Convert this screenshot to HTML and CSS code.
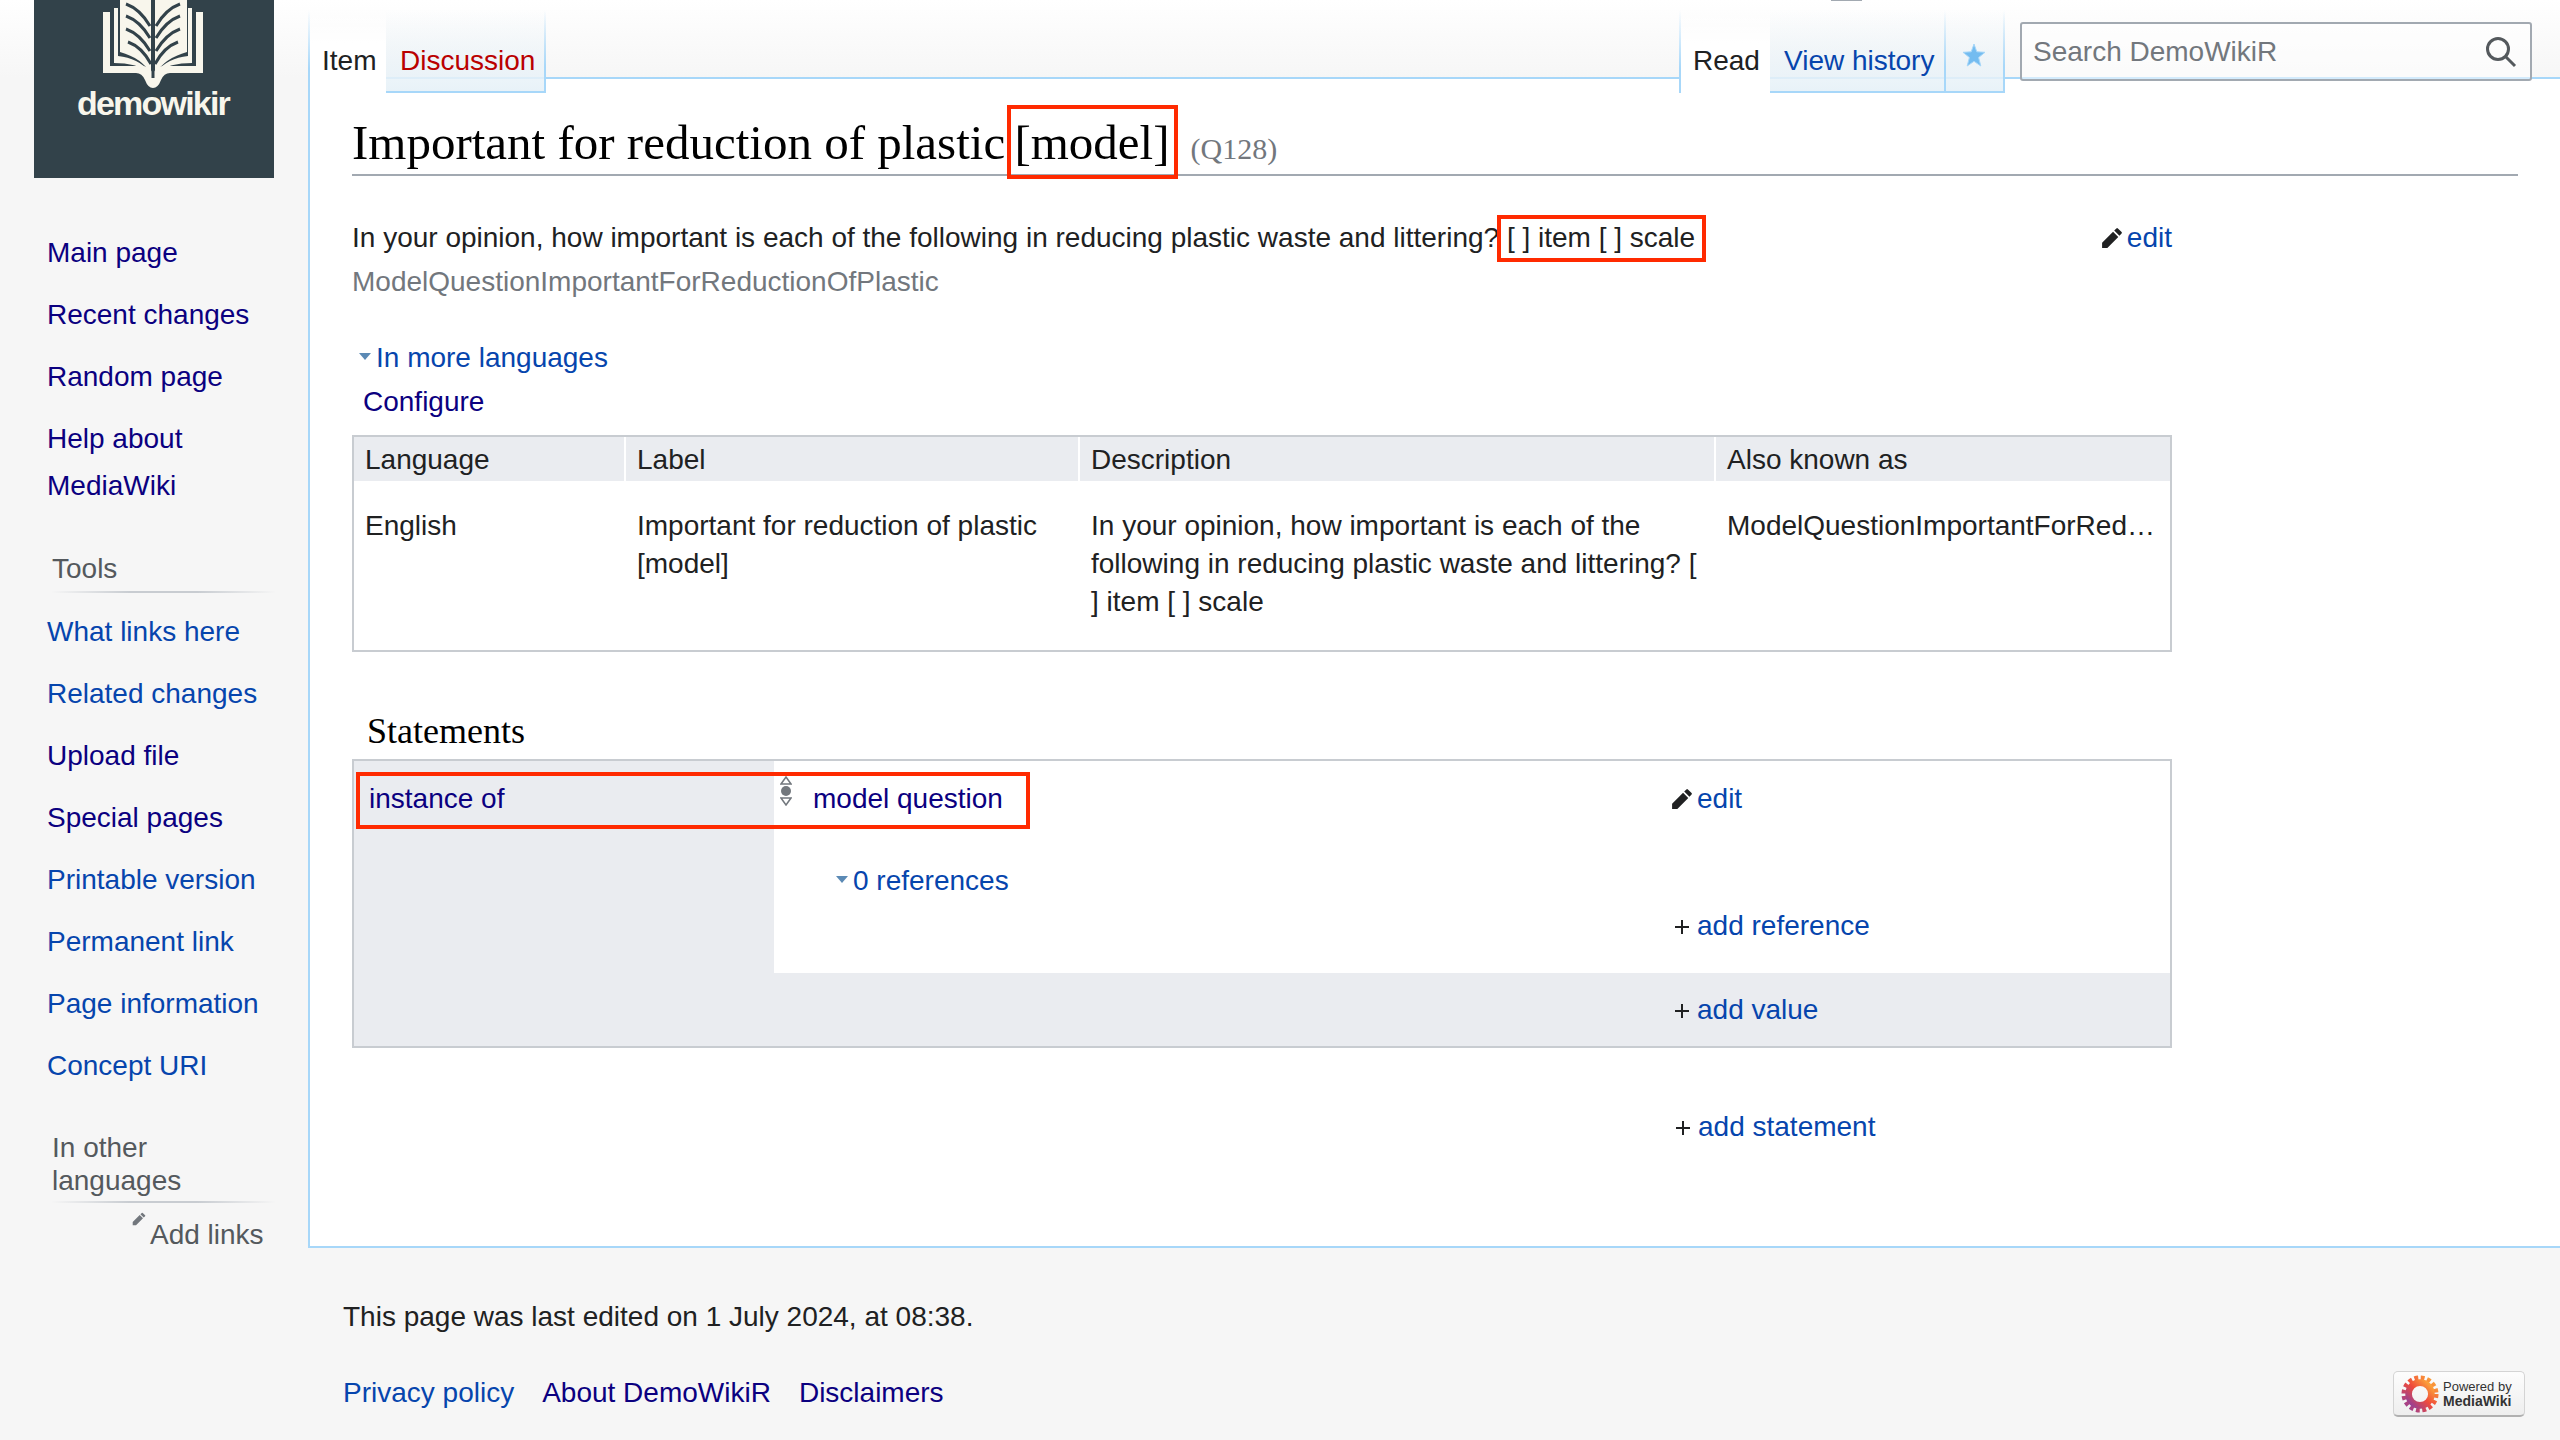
FILE: index.html
```
<!DOCTYPE html>
<html lang="en">
<head>
<meta charset="utf-8">
<title>Important for reduction of plastic [model]</title>
<link rel="stylesheet" href="styles.css">
</head>
<body>
<div class="tick"></div>
<div class="page">
  <aside class="sidebar">
    <div class="logo">
      <svg class="logo-mark" viewBox="0 0 240 92" aria-hidden="true">
        <path class="cream" d="M69 12h7v54h32q8 0 11 8 3-8 11-8h32V12h7v61h-33q-6 0-9 7-3 8-8 8t-8-8q-3-7-9-7H69z"/>
        <path class="cream" d="M80 8h4v48q20 2 32 16-14-9-36-9zM158 8h-4v48q-20 2-32 16 14-9 36-9z"/>
        <path class="cream" d="M86 0h31v74Q108 58 86 52zM121 0h32v52q-22 6-32 22z"/>
        <path class="vein" d="M119 0v78M92 4q14 5 24 22M92 16q14 5 24 22M92 29q14 5 24 22M94 42q14 5 23 22M146 4q-14 5-24 22M146 16q-14 5-24 22M146 29q-14 5-24 22M144 42q-14 5-23 22"/>
      </svg>
      <div class="logo-word">demowikir</div>
    </div>
    <ul class="nav nav-first">
      <li><a class="seen" href="#">Main page</a></li>
      <li><a class="seen" href="#">Recent changes</a></li>
      <li><a class="seen" href="#">Random page</a></li>
      <li><a class="seen" href="#">Help about MediaWiki</a></li>
    </ul>
    <h3 class="nav-head">Tools</h3>
    <ul class="nav">
      <li><a href="#">What links here</a></li>
      <li><a href="#">Related changes</a></li>
      <li><a class="seen" href="#">Upload file</a></li>
      <li><a class="seen" href="#">Special pages</a></li>
      <li><a href="#">Printable version</a></li>
      <li><a href="#">Permanent link</a></li>
      <li><a href="#">Page information</a></li>
      <li><a href="#">Concept URI</a></li>
    </ul>
    <h3 class="nav-head nav-head-lang">In other languages</h3>
    <div class="add-links">
      <svg class="add-pencil" viewBox="0 0 20 20" aria-hidden="true"><path d="M16.77 8l1.94-2a1 1 0 0 0 0-1.41l-3.34-3.3a1 1 0 0 0-1.41 0L12 3.23zM1 14.25V19h4.75l9.96-9.96-4.75-4.75z"/></svg>
      <span>Add links</span>
    </div>
  </aside>

  <div class="main">
    <nav class="tabs">
      <a class="tab tab-active tab-item" href="#">Item</a>
      <a class="tab tab-new" href="#">Discussion</a>
      <div class="tabs-right">
        <a class="tab tab-active tab-read" href="#">Read</a>
        <a class="tab tab-history" href="#">View history</a>
        <a class="tab tab-star" href="#" aria-label="Watch">
          <svg viewBox="0 0 24 24" aria-hidden="true"><path d="M12 1l2.800 7.800 8.200.5-6.400 5.200 2.200 8.500L12 18.300 5.200 23l2.200-8.500L1 9.300l8.200-.5z"/></svg>
        </a>
        <div class="search">
          <span>Search DemoWikiR</span>
          <svg viewBox="0 0 32 32" aria-hidden="true"><circle cx="13" cy="13" r="10.500"/><path d="M20.500 20.500L30 30"/></svg>
        </div>
      </div>
    </nav>

    <main class="content">
      <h1 class="title">Important for reduction of plastic <span class="mark mark-title">[model]</span><span class="qid">(Q128)</span></h1>

      <div class="desc-row">
        <div>In your opinion, how important is each of the following in reducing plastic waste and littering?<span class="mark mark-desc"> [ ] item [ ] scale</span></div>
        <a class="edit" href="#"><svg class="pencil" viewBox="0 0 20 20" aria-hidden="true"><path d="M16.77 8l1.940-2a1 1 0 0 0 0-1.410l-3.340-3.300a1 1 0 0 0-1.410 0L12 3.230zM1 14.250V19h4.750l9.960-9.960-4.750-4.750z"/></svg><span>edit</span></a>
      </div>
      <div class="alias">ModelQuestionImportantForReductionOfPlastic</div>

      <div class="toggle toggle-langs"><i class="tri"></i><a href="#">In more languages</a></div>
      <div class="configure"><a class="seen" href="#">Configure</a></div>

      <div class="lang-table">
        <div class="lang-head">Language</div>
        <div class="lang-head">Label</div>
        <div class="lang-head">Description</div>
        <div class="lang-head">Also known as</div>
        <div class="lang-cell">English</div>
        <div class="lang-cell">Important for reduction of plastic [model]</div>
        <div class="lang-cell">In your opinion, how important is each of the following in reducing plastic waste and littering? [ ] item [ ] scale</div>
        <div class="lang-cell lang-alias">ModelQuestionImportantForRed…</div>
      </div>

      <h2 class="st-title">Statements</h2>
      <div class="st-group">
        <div class="st-body">
          <div class="st-label"><a class="seen" href="#">instance of</a></div>
          <div class="st-list">
            <div class="st-value">
              <svg class="rank" viewBox="0 0 12 30" aria-hidden="true">
                <path class="rank-o" d="M6 1l5 7H1z"/><circle class="rank-f" cx="6" cy="15" r="5"/><path class="rank-o" d="M6 29l5-7H1z"/>
              </svg>
              <a class="seen value-link" href="#">model question</a>
              <a class="edit edit-st" href="#"><svg class="pencil" viewBox="0 0 20 20" aria-hidden="true"><path d="M16.770 8l1.940-2a1 1 0 0 0 0-1.410l-3.340-3.300a1 1 0 0 0-1.410 0L12 3.230zM1 14.250V19h4.750l9.960-9.960-4.750-4.750z"/></svg><span>edit</span></a>
            </div>
            <div class="toggle toggle-refs"><i class="tri"></i><a href="#">0 references</a></div>
            <div class="add add-ref"><svg class="plus" viewBox="0 0 14 14" aria-hidden="true"><path d="M6 0h2v6h6v2H8v6H6V8H0V6h6z"/></svg><a href="#">add reference</a></div>
          </div>
          <div class="mark-row" aria-hidden="true"></div>
        </div>
        <div class="st-foot"><div class="add"><svg class="plus" viewBox="0 0 14 14" aria-hidden="true"><path d="M6 0h2v6h6v2H8v6H6V8H0V6h6z"/></svg><a href="#">add value</a></div></div>
      </div>
      <div class="add add-statement"><svg class="plus" viewBox="0 0 14 14" aria-hidden="true"><path d="M6 0h2v6h6v2H8v6H6V8H0V6h6z"/></svg><a href="#">add statement</a></div>
    </main>

    <footer class="footer">
      <div class="footer-info">This page was last edited on 1 July 2024, at 08:38.</div>
      <div class="footer-row">
        <div class="footer-links">
          <a href="#">Privacy policy</a>
          <a class="visited" href="#">About DemoWikiR</a>
          <a class="visited" href="#">Disclaimers</a>
        </div>
        <div class="badge">
          <svg class="badge-sun" viewBox="0 0 40 40" aria-hidden="true">
            <defs><linearGradient id="sun" x1="1" y1="0" x2="0" y2="1"><stop offset="0" stop-color="#fdb03a"/><stop offset=".5" stop-color="#ef4a3a"/><stop offset="1" stop-color="#8e3fa0"/></linearGradient></defs>
            <circle cx="20" cy="20" r="17" fill="none" stroke="url(#sun)" stroke-width="5" stroke-dasharray="4 2.700"/>
            <circle cx="20" cy="20" r="12" fill="none" stroke="url(#sun)" stroke-width="7"/>
          </svg>
          <div class="badge-text"><span>Powered by</span><b>MediaWiki</b></div>
        </div>
      </div>
    </footer>
  </div>
</div>
</body>
</html>
```
FILE: styles.css
```
* { box-sizing: border-box; }
html, body { margin: 0; height: 1440px; overflow: hidden; }
body {
  background: linear-gradient(#fff 0, #f6f6f6 78px) no-repeat #f6f6f6;
  font: 28px/38px "Liberation Sans", Arial, sans-serif;
  color: #202122;
  position: relative;
}
a { color: #0645ad; text-decoration: none; }
a.seen { color: #0b0080; }
ul { list-style: none; margin: 0; padding: 0; }
h1, h2, h3 { margin: 0; font-weight: normal; }

.tick { position: absolute; left: 1831px; top: 0; width: 31px; height: 1px; background: #a2a9b1; }

.page { display: grid; grid-template-columns: 308px 1fr; height: 1440px; }

/* sidebar */
.logo { margin-left: 34px; width: 240px; height: 178px; background: #32424a; overflow: hidden; }
.logo-mark { display: block; width: 240px; height: 92px; }
.cream { fill: #f8f6ec; }
.vein { fill: none; stroke: #32424a; stroke-width: 3; }
.logo-word { margin-top: -4px; padding-right: 2px; text-align: center; font-size: 34px; line-height: 30px; font-weight: bold; letter-spacing: -1.800px; color: #f8f6ec; }
.nav { margin-left: 47px; line-height: 47px; }
.nav li { margin-bottom: 15px; width: 230px; }
.nav-first { margin-top: 51px; }
.nav-head { margin: 41px 33px 0 52px; padding-bottom: 3px; line-height: 38px; font-size: 28px; color: #54595d; position: relative; }
.nav-head { border-bottom: 2px solid; border-image: linear-gradient(to right, rgba(200,204,209,0), #c8ccd1 35%, #c8ccd1 65%, rgba(200,204,209,0)) 1; margin-bottom: 15px; }
.nav-head-lang { margin-top: 43px; margin-bottom: 13px; padding-bottom: 4px; line-height: 32.500px; padding-right: 40px; }
.add-links { display: flex; align-items: flex-start; margin-left: 132px; color: #54595d; }
.add-pencil { width: 14px; height: 14px; margin: -4px 4px 0 0; fill: #72777d; }

/* tabs */
.tabs { display: flex; height: 93px; margin-bottom: -16px; position: relative; z-index: 1; }
.tabs-right { display: flex; margin-left: auto; padding-right: 28px; }
.tab {
  display: block; height: 83px; margin-top: 10px; padding-top: 32px;
  background:
    linear-gradient(to bottom, rgba(167,215,249,0), #a7d7f9 70%) right top / 2px 100% no-repeat,
    linear-gradient(to bottom, rgba(255,255,255,0) 0, #e8f2f8 100%);
  border-bottom: 2px solid #a7d7f9;
}
.tab-active {
  border-bottom: 0;
  background:
    linear-gradient(to bottom, rgba(167,215,249,0), #a7d7f9 70%) left top / 2px 100% no-repeat,
    linear-gradient(to bottom, rgba(255,255,255,0), #fff 40%);
  color: #202122;
}
.tab-item { width: 78px; padding-left: 14px; }
.tab-new { width: 160px; padding-left: 14px; color: #ba0000; }
.tab-read { width: 91px; padding-left: 14px; }
.tab-history { width: 176px; padding-left: 14px; }
.tab-star { width: 59px; padding: 33px 0 0 16px; }
.tab-star svg { display: block; width: 24px; height: 24px; fill: #74bcf0; stroke: #a7d7f9; stroke-width: 1; }
.search {
  display: flex; align-items: center; justify-content: space-between;
  width: 512px; height: 59px; margin: 22px 0 0 15px; padding: 0 13px 0 11px;
  background: rgba(255,255,255,.5); border: 2px solid #a2a9b1; border-radius: 3px; color: #72777d;
}
.search svg { width: 32px; height: 32px; fill: none; stroke: #54595d; stroke-width: 3; }

/* content */
.content { height: 1171px; padding: 35px 42px 0; background: #fff; border: solid #a7d7f9; border-width: 2px 0 2px 2px; }
.title { height: 62px; font: 49px/58px "Liberation Serif", Georgia, serif; color: #000; border-bottom: 2px solid #a2a9b1; }
.qid { margin-left: 21px; font-size: 30px; color: #72777d; }
.mark { position: relative; }
.mark-title { margin-left: -3px; }
.mark::after { content: ""; position: absolute; border: 4px solid #ff2a00; }
.mark-title::after { left: -7px; right: -8px; top: -10px; bottom: -9px; }
.mark-desc::after { left: -2px; right: -11px; top: -7px; bottom: -9px; }

.desc-row { display: flex; justify-content: space-between; width: 1820px; margin-top: 43px; }
.edit { display: flex; align-items: center; }
.pencil { width: 22px; height: 22px; margin-right: 4px; fill: #202122; }
.alias { margin-top: 6px; color: #72777d; }
.toggle { display: flex; align-items: center; }
.tri { width: 0; height: 0; margin: -4px 5px 0 0; border: 6px solid transparent; border-top: 7px solid #5b8ab5; border-bottom: 0; }
.toggle-langs { margin: 38px 0 0 7px; }
.configure { margin: 6px 0 0 11px; }

.lang-table {
  display: grid; grid-template-columns: 270px 452px 634px minmax(0, 1fr); column-gap: 2px;
  width: 1820px; height: 217px; margin-top: 14px; border: 2px solid #c8ccd1; align-content: start;
}
.lang-head { height: 44px; padding: 1px 0 0 11px; line-height: 44px; background: #eaecf0; }
.lang-cell { padding: 26px 8px 0 11px; line-height: 37.800px; }
.lang-alias { white-space: nowrap; }

.st-title { margin: 57px 0 6px 15px; font: 36px/44px "Liberation Serif", Georgia, serif; color: #000; }
.st-group { width: 1820px; height: 289px; background: #eaecf0; border: 2px solid #c8ccd1; }
.st-body { display: flex; height: 212px; position: relative; }
.st-label { width: 420px; padding: 19px 0 0 15px; }
.st-list { flex: 1; background: #fff; position: relative; }
.st-value { display: flex; height: 38px; padding-top: 0; margin-top: 19px; padding-left: 6px; position: relative; }
.rank { width: 12px; height: 30px; margin-top: -4px; flex: none; }
.rank-o { fill: #fff; stroke: #72777d; stroke-width: 1.500; }
.rank-f { fill: #72777d; }
.value-link { margin-left: 21px; }
.edit-st { margin-left: auto; width: 499px; height: 38px; }
.toggle-refs { margin: 44px 0 0 62px; }
.add { display: flex; align-items: center; }
.plus { width: 14px; height: 14px; margin: 2px 8px 0 0; fill: #202122; flex: none; }
.add-ref { margin: 7px 0 0 901px; }
.mark-row { position: absolute; left: 2px; top: 11px; width: 674px; height: 57px; border: 4px solid #ff2a00; pointer-events: none; }
.st-foot { padding: 18px 0 0 1321px; }
.add-statement { margin: 60px 0 0 1324px; }

/* footer */
.footer { padding: 50px 35px 0; }
.footer-row { display: flex; justify-content: space-between; margin-top: 35px; }
.footer-links { display: flex; gap: 28px; padding-top: 3px; }
.footer-links .visited { color: #0b0080; }
.badge {
  display: flex; align-items: center; width: 132px; height: 46px; padding: 0 3px 0 7px;
  background: linear-gradient(#fdfdfd, #eee); border: 1px solid #d4d4d4; border-bottom: 2px solid #b0b0b0; border-radius: 5px;
}
.badge-sun { width: 38px; height: 38px; flex: none; }
.badge-text { display: flex; flex-direction: column; margin-left: 4px; color: #333; font-size: 13px; line-height: 14px; }
.badge-text b { font-size: 14px; }
```
